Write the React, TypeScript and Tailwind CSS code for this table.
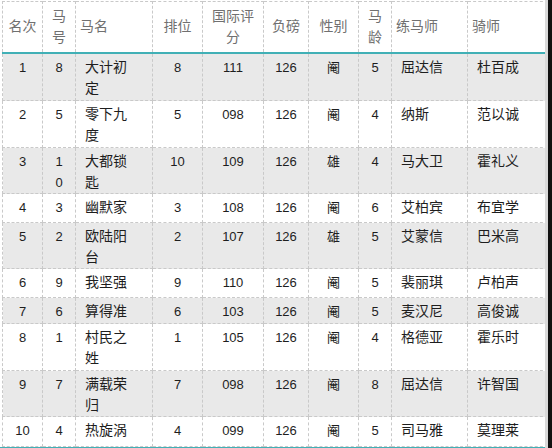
const head = ['名次', '马\n号', '马名', '排位', '国际评\n分', '负磅', '性别', '马\n龄', '练马师', '骑师']

const widths = ['w-[40px]', 'w-[33px]', 'w-[77px]', 'w-[50px]', 'w-[61px]', 'w-[45px]', 'w-[50px]', 'w-[33px]', 'w-[76px]', 'w-[80px]']

const rows = [
  { h: 'h-[48px]', d: ['1', '8', '大计初\n定', '8', '111', '126', '阉', '5', '屈达信', '杜百成'] },
  { h: 'h-[47px]', d: ['2', '5', '零下九\n度', '5', '098', '126', '阉', '4', '纳斯', '范以诚'] },
  { h: 'h-[45px]', d: ['3', '1\n0', '大都锁\n匙', '10', '109', '126', '雄', '4', '马大卫', '霍礼义'] },
  { h: 'h-[29px]', d: ['4', '3', '幽默家', '3', '108', '126', '阉', '6', '艾柏宾', '布宜学'] },
  { h: 'h-[45px]', d: ['5', '2', '欧陆阳\n台', '2', '107', '126', '雄', '5', '艾蒙信', '巴米高'] },
  { h: 'h-[29px]', d: ['6', '9', '我坚强', '9', '110', '126', '阉', '5', '裴丽琪', '卢柏声'] },
  { h: 'h-[26px]', d: ['7', '6', '算得准', '6', '103', '126', '阉', '5', '麦汉尼', '高俊诚'] },
  { h: 'h-[47px]', d: ['8', '1', '村民之\n姓', '1', '105', '126', '阉', '4', '格德亚', '霍乐时'] },
  { h: 'h-[46px]', d: ['9', '7', '满载荣\n归', '7', '098', '126', '阉', '8', '屈达信', '许智国'] },
  { h: 'h-[30px]', d: ['10', '4', '热旋涡', '4', '099', '126', '阉', '5', '司马雅', '莫理莱'] },
]

// columns whose text sits on the left
const leftCols = [2, 8, 9]

function App() {
  return (
    <div className="w-[552px] h-[448px] bg-white flex overflow-hidden font-['Liberation_Sans','Noto_Sans_CJK_SC',sans-serif]">
      <div className="w-[545px] flex flex-col">
        <table className="table-fixed border-collapse w-[543px] ml-[2px] mt-[1px]">
          <colgroup>
            {widths.map((w, i) => (
              <col key={i} className={w} />
            ))}
          </colgroup>
          <thead>
            <tr className="h-[51px]">
              {head.map((t, i) => (
                <th
                  key={i}
                  className={`border border-dashed border-[#c9c9c9] border-b-2 [border-bottom-style:solid] border-b-[#41b0b6] font-normal text-[14px] leading-[21px] text-[#707070] whitespace-pre-line align-middle ${
                    leftCols.includes(i) ? 'text-left pl-[4px]' : 'text-center'
                  }`}
                >
                  {t}
                </th>
              ))}
            </tr>
          </thead>
          <tbody>
            {rows.map((r, ri) => (
              <tr key={ri} className={`${r.h} ${ri % 2 === 0 ? 'bg-[#e9e9e9]' : 'bg-white'}`}>
                {r.d.map((t, i) => (
                  <td
                    key={i}
                    className={`border border-dashed border-[#c9c9c9] align-top pt-[3px] leading-[21px] text-[#1e1e1e] whitespace-pre-line ${
                      leftCols.includes(i) ? 'text-left pl-[9px] text-[14px]' : 'text-center text-[13px]'
                    }`}
                  >
                    {t}
                  </td>
                ))}
              </tr>
            ))}
          </tbody>
        </table>
        <div className="h-[2px] mt-auto bg-[#41b0b6]" />
      </div>
      <div className="w-[3px] bg-[#d9d9d9]" />
      <div className="flex-1 bg-[#111]" />
    </div>
  )
}

export default App
